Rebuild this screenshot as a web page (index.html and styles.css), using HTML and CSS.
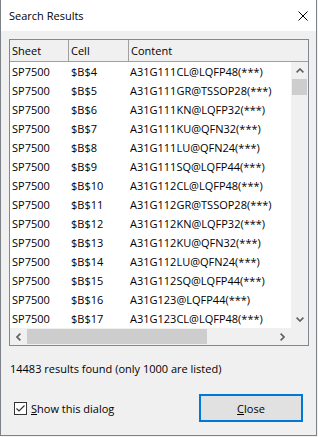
FILE: index.html
```html
<!DOCTYPE html>
<html lang="en">
<head>
    <meta charset="UTF-8">
    <meta name="viewport" content="width=device-width, initial-scale=1.0">
    <title>Search Results</title>
    <link rel="stylesheet" href="styles.css">
</head>
<body>

<div class="dialog">
    <div class="title-bar">
        <span class="title">Search Results</span>
        <svg class="close-icon" width="10" height="10" viewBox="0 0 10 10">
            <path d="M0.5 0.5 L9.5 9.5 M9.5 0.5 L0.5 9.5" stroke="#000" stroke-width="1" fill="none"/>
        </svg>
    </div>

    <div class="dialog-body">
        <!-- Lista de resultados -->
        <div class="result-list">
            <div class="list-head">
                <div class="col col-sheet">Sheet</div>
                <div class="col col-cell">Cell</div>
                <div class="col col-content">Content</div>
            </div>

            <div class="list-main">
                <div id="rows" class="rows"></div>
                <div class="vscroll">
                    <div class="scroll-btn">
                        <svg width="8" height="5" viewBox="0 0 8 5"><path d="M0.6 4.4 L4 1 L7.4 4.4" stroke="#606060" stroke-width="1.6" fill="none"/></svg>
                    </div>
                    <div class="vtrack"><div class="vthumb"></div></div>
                    <div class="scroll-btn">
                        <svg width="8" height="5" viewBox="0 0 8 5"><path d="M0.6 0.6 L4 4 L7.4 0.6" stroke="#606060" stroke-width="1.6" fill="none"/></svg>
                    </div>
                </div>
            </div>

            <div class="list-foot">
                <div class="hscroll">
                    <div class="scroll-btn">
                        <svg width="5" height="8" viewBox="0 0 5 8"><path d="M4.4 0.6 L1 4 L4.4 7.4" stroke="#606060" stroke-width="1.6" fill="none"/></svg>
                    </div>
                    <div class="htrack"><div class="hthumb"></div></div>
                    <div class="scroll-btn">
                        <svg width="5" height="8" viewBox="0 0 5 8"><path d="M0.6 0.6 L4 4 L0.6 7.4" stroke="#606060" stroke-width="1.6" fill="none"/></svg>
                    </div>
                </div>
                <div class="corner"></div>
            </div>
        </div>

        <p class="status">14483 results found (only 1000 are listed)</p>

        <div class="footer-row">
            <label class="check-label">
                <span class="checkbox">
                    <svg width="11" height="11" viewBox="0 0 11 11"><path d="M1.5 5.5 L4 8 L9.5 2.5" stroke="#333" stroke-width="1.2" fill="none"/></svg>
                </span>
                <span><u>S</u>how this dialog</span>
            </label>
            <button class="close-button"><u>C</u>lose</button>
        </div>
    </div>
</div>

<script>
    const results = [
        ["SP7500", "$B$4", "A31G111CL@LQFP48(***)"],
        ["SP7500", "$B$5", "A31G111GR@TSSOP28(***)"],
        ["SP7500", "$B$6", "A31G111KN@LQFP32(***)"],
        ["SP7500", "$B$7", "A31G111KU@QFN32(***)"],
        ["SP7500", "$B$8", "A31G111LU@QFN24(***)"],
        ["SP7500", "$B$9", "A31G111SQ@LQFP44(***)"],
        ["SP7500", "$B$10", "A31G112CL@LQFP48(***)"],
        ["SP7500", "$B$11", "A31G112GR@TSSOP28(***)"],
        ["SP7500", "$B$12", "A31G112KN@LQFP32(***)"],
        ["SP7500", "$B$13", "A31G112KU@QFN32(***)"],
        ["SP7500", "$B$14", "A31G112LU@QFN24(***)"],
        ["SP7500", "$B$15", "A31G112SQ@LQFP44(***)"],
        ["SP7500", "$B$16", "A31G123@LQFP44(***)"],
        ["SP7500", "$B$17", "A31G123CL@LQFP48(***)"]
    ];

    const rows = document.getElementById("rows");
    const classes = ["col-sheet", "col-cell", "col-content"];

    results.forEach(result => {
        const row = document.createElement("div");
        row.className = "row";
        result.forEach((text, i) => {
            const cell = document.createElement("div");
            cell.className = "col " + classes[i];
            cell.textContent = text;
            row.appendChild(cell);
        });
        rows.appendChild(row);
    });
</script>

</body>
</html>
```

FILE: styles.css
```css
/* General */
* {
    margin: 0;
    padding: 0;
    box-sizing: border-box;
}
body {
    font-family: "Open Sans", "Noto Sans", sans-serif;
    font-size: 11px;
    line-height: 15px;
    color: #000;
    background-color: #f3f3f3;
}

/* Ventana */
.dialog {
    width: 317px;
    height: 436px;
    display: flex;
    flex-direction: column;
    background-color: #f0f0f0;
    border: 1px solid #7d8289;
    border-top: none;
}
.title-bar {
    height: 31px;
    flex-shrink: 0;
    display: flex;
    align-items: center;
    justify-content: space-between;
    padding: 0 8px;
    background-color: #fff;
}
.close-icon {
    display: block;
}
.dialog-body {
    flex: 1;
    display: flex;
    flex-direction: column;
    padding: 8px 7px 13px 8px;
}

/* Lista */
.result-list {
    height: 307px;
    display: flex;
    flex-direction: column;
    border: 1px solid #828790;
    background-color: #fff;
}
.list-head {
    display: flex;
    height: 22px;
    flex-shrink: 0;
    align-items: stretch;
    background-color: #f0f0f0;
    border-bottom: 1px solid #a0a0a0;
}
.list-head .col {
    display: flex;
    align-items: center;
}
.col {
    white-space: nowrap;
    padding-left: 2px;
}
.col-sheet {
    width: 58px;
}
.col-cell {
    width: 60px;
    padding-left: 3px;
}
.col-content {
    flex: 1;
}
.list-head .col-cell,
.list-head .col-content {
    border-left: 1px solid #a0a0a0;
    padding-left: 2px;
}
.list-main {
    flex: 1;
    display: flex;
    min-height: 0;
}
.rows {
    flex: 1;
    overflow: hidden;
}
.row {
    display: flex;
    height: 19px;
    line-height: 19px;
}

/* Barras de desplazamiento */
.vscroll {
    width: 17px;
    display: flex;
    flex-direction: column;
    background-color: #f0f0f0;
}
.scroll-btn {
    width: 17px;
    height: 17px;
    flex-shrink: 0;
    display: flex;
    align-items: center;
    justify-content: center;
}
.scroll-btn svg {
    display: block;
}
.vtrack {
    flex: 1;
}
.vthumb {
    height: 16px;
    margin: 0 1px;
    background-color: #cdcdcd;
}
.list-foot {
    display: flex;
    height: 17px;
    flex-shrink: 0;
}
.hscroll {
    flex: 1;
    display: flex;
    background-color: #f0f0f0;
}
.htrack {
    flex: 1;
    padding: 1px 0;
}
.hthumb {
    width: 180px;
    height: 100%;
    background-color: #cdcdcd;
}
.corner {
    width: 17px;
    background-color: #f0f0f0;
}

/* Pie */
.status {
    margin-top: 15px;
    padding-left: 1px;
}
.footer-row {
    margin-top: 18px;
    display: flex;
    align-items: center;
    justify-content: space-between;
}
.check-label {
    display: flex;
    align-items: center;
    margin-left: 5px;
}
.checkbox {
    width: 13px;
    height: 13px;
    display: flex;
    align-items: center;
    justify-content: center;
    margin-right: 4px;
    border: 1px solid #333;
    background-color: #fff;
}
.checkbox svg {
    display: block;
}
.close-button {
    width: 104px;
    height: 28px;
    margin-right: 6px;
    font-family: inherit;
    font-size: 11px;
    color: #000;
    background-color: #e1e1e1;
    border: 2px solid #0078d7;
}
```
